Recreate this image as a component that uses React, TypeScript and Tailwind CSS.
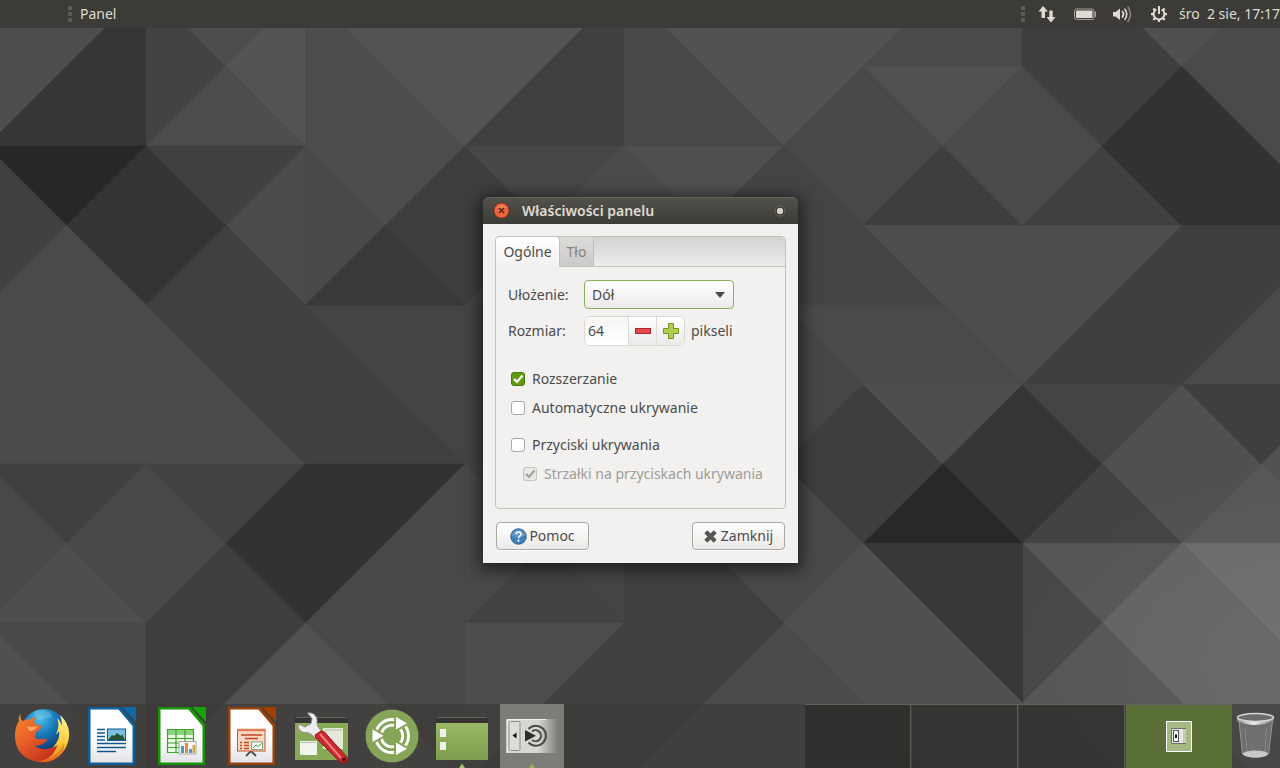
import { useState } from "react";

// Wallpaper facets on a half-cell lattice, "x,y x,y ..." plus a shade
const facets: [string, string][] = [
  ["0,0 2,0 0,2", "#4c4c4c"],
  ["2,0 2,2 0,2", "#363636"],
  ["2,0 3,1 2,2", "#434343"],
  ["2,0 4,0 3,1", "#4d4d4d"],
  ["3,1 4,0 4,2", "#545454"],
  ["2,2 3,1 4,2", "#4d4d4d"],
  ["4,0 6,2 5,3 4,2", "#4d4d4d"],
  ["4,0 8,0 6,2", "#545454"],
  ["8,0 8,2 6,2", "#404040"],
  ["0,2 2,2 1,3", "#272727"],
  ["0,2 1,3 0,4", "#404040"],
  ["2,2 3,3 2,4 1,3", "#343434"],
  ["2,2 4,2 3,3", "#404040"],
  ["4,2 4,4 3,3", "#4b4b4b"],
  ["4,2 5,3 4,4", "#494949"],
  ["1,3 4,6 0,6 0,4", "#4b4b4b"],
  ["3,3 6,6 4,6 2,4", "#404040"],
  ["4,4 6,4 8,4 8,6 6,6", "#444444"],
  ["4,4 6,6 4,6", "#404040"],
  ["5,3 6,4 4,4", "#393939"],
  ["5,3 6,2 7,3 6,4", "#3e3e3e"],
  ["6,2 8,2 7,3", "#474747"],
  ["8,0 12,0 10,2", "#525252"],
  ["8,0 10,2 8,2", "#484848"],
  ["8,2 10,2 9,3", "#505050"],
  ["8,2 9,3 8,4 7,3", "#4b4b4b"],
  ["10,2 11,3 9,5 8,4", "#444444"],
  ["12,0 13,0 13,1 11,1", "#4a4a4a"],
  ["11,1 13,1 12,2", "#515151"],
  ["10,2 11,1 12,2 11,3", "#484848"],
  ["11,3 12,2 13,3", "#3e3e3e"],
  ["12,2 13,1 14,2 13,3", "#4a4a4a"],
  ["13,3 14,2 15,3", "#404040"],
  ["13,0 14,0 15,1 14,2 13,1", "#3f3f3f"],
  ["14,0 16,0 15,1", "#505050"],
  ["16,0 17,0 17,3 15,1", "#4a4a4a"],
  ["15,1 17,3 15,3 14,2", "#323232"],
  ["11,3 15,3 13,5", "#4d4d4d"],
  ["11,3 12,4 10,4", "#444444"],
  ["10,4 12,4 13,5 11,5", "#4a4a4a"],
  ["9,5 10,4 11,5 10,6", "#464646"],
  ["15,3 17,3 15,5 13,5", "#3f3f3f"],
  ["17,3 17,5 15,5", "#4a4a4a"],
  ["11,5 12,6 11,7 10,6", "#3e3e3e"],
  ["11,5 13,5 12,6", "#4e4e4e"],
  ["13,5 14,6 13,7 12,6", "#363636"],
  ["12,6 13,7 11,7", "#282828"],
  ["13,5 15,5 14,6", "#444444"],
  ["15,5 16,6 15,7 14,6", "#505050"],
  ["15,5 17,5 16,6", "#3f3f3f"],
  ["14,6 15,7 13,7", "#434343"],
  ["16,6 17,5 17,7", "#525252"],
  ["16,6 17,7 15,7", "#575757"],
  ["13,7 15,7 14,8", "#555555"],
  ["15,7 17,7 17,9", "#6a6a6a"],
  ["15,7 17,9 17,11 14,8", "#626262"],
  ["13,7 14,8 13,9", "#474747"],
  ["11,7 13,7 13,9", "#383838"],
  ["14,8 16,10 12,10 13,9", "#555555"],
  ["10,6 11,7 10,8 8,6", "#494949"],
  ["11,7 14,10 12,10 10,8", "#505050"],
  ["10,8 12,10 8,10", "#4a4a4a"],
  ["8,6 10,8 8,10", "#404040"],
  ["0,6 2,6 1,7", "#404040"],
  ["2,6 4,6 3,7", "#434343"],
  ["4,6 6,6 4,8 3,7", "#323232"],
  ["2,6 3,7 2,8 1,7", "#494949"],
  ["0,6 1,7 0,8", "#494949"],
  ["1,7 2,8 0,8", "#4e4e4e"],
  ["0,8 2,8 2,10", "#494949"],
  ["0,8 2,10 0,10", "#505050"],
  ["3,7 4,8 2,10 2,8", "#3e3e3e"],
  ["4,8 6,6 6,10", "#484848"],
  ["4,8 6,10 2,10", "#515151"],
  ["6,6 7,7 6,8", "#494949"],
  ["6,6 8,6 8,8 7,7", "#454545"],
  ["7,7 8,8 6,8", "#424242"],
  ["6,8 8,8 6,10", "#4d4d4d"],
  ["8,8 8,10 6,10", "#414141"],
];

function Wallpaper() {
  return (
    <svg
      className="absolute inset-0 h-full w-full"
      viewBox="0.163 0.163 16.07 9.66"
      preserveAspectRatio="none"
      aria-hidden="true"
    >
      <defs>
        <radialGradient id="glow" cx="1" cy="0.85" r="0.25">
          <stop offset="0" stopColor="#fff" stopOpacity="0.06" />
          <stop offset="1" stopColor="#fff" stopOpacity="0" />
        </radialGradient>
      </defs>
      <rect width="17" height="10" fill="#464646" />
      {facets.map(([points, fill]) => (
        <polygon
          key={points}
          points={points}
          fill={fill}
          stroke={fill}
          strokeWidth="0.01"
        />
      ))}
      <rect width="17" height="10" fill="url(#glow)" />
    </svg>
  );
}

function Grip() {
  return (
    <span className="flex flex-col gap-0.5" aria-hidden="true">
      <i className="size-1 bg-[#5c5b57]" />
      <i className="size-1 bg-[#5c5b57]" />
      <i className="size-1 bg-[#5c5b57]" />
    </span>
  );
}

function NetworkIcon() {
  return (
    <svg width="20" height="20" viewBox="0 0 20 20" fill="#dfdbd2">
      <path d="M6 2 L11 7.500 H8 V14 H4.500 V7.500 H1.500Z" />
      <path d="M14 18.500 L9.500 13 H12.300 V6.500 H15.700 V13 H18.500Z" />
    </svg>
  );
}

function BatteryIcon() {
  return (
    <svg width="24" height="20" viewBox="0 0 24 20">
      <rect x="1.500" y="5" width="19.500" height="10.500" rx="2" fill="none" stroke="#a5a29b" />
      <rect x="3" y="6.500" width="16.500" height="7.500" rx="0.500" fill="#dfdbd2" />
      <path d="M21.500 7.500 H23 V13 H21.500Z" fill="#a5a29b" />
    </svg>
  );
}

function VolumeIcon() {
  return (
    <svg width="22" height="20" viewBox="0 0 22 20" fill="none" strokeLinecap="round">
      <path d="M2 8 H4.500 L9 4.500 V16 L4.500 12.500 H2Z" fill="#dfdbd2" />
      <path d="M11.500 7.500 Q13.500 10.200 11.500 13" stroke="#dfdbd2" strokeWidth="1.700" />
      <path d="M14 5.200 Q17.500 10.200 14 15.300" stroke="#dfdbd2" strokeWidth="1.600" />
      <path d="M17 3 Q22 10.200 17 17.500" stroke="#8a8882" strokeWidth="1.500" />
    </svg>
  );
}

function SessionIcon() {
  return (
    <svg width="20" height="20" viewBox="0 0 20 20" fill="none" stroke="#dfdbd2">
      <path d="M7.300 5.300 A5.400 5.400 0 1 0 12.700 5.300" strokeWidth="2" />
      <path d="M10 2 V10" strokeWidth="2" />
      <path
        d="M10 15.500 V18 M4.800 10.200 H2 M15.200 10.200 H18 M6.200 14 L4.300 15.900 M13.800 14 L15.700 15.900 M6 6.300 L4.300 4.500 M14 6.300 L15.700 4.500"
        strokeWidth="2.200"
      />
    </svg>
  );
}

function TopPanel() {
  return (
    <header className="relative flex h-7 items-center justify-between bg-[#3c3b37] text-sm text-[#dfdbd2] [text-shadow:1px_1px_0_#22211e]">
      <div className="flex items-center gap-2 pl-17">
        <Grip />
        <button type="button">Panel</button>
      </div>
      <div className="flex items-center">
        <Grip />
        <button type="button" aria-label="Sieć" className="ml-3">
          <NetworkIcon />
        </button>
        <button type="button" aria-label="Bateria" className="ml-4">
          <BatteryIcon />
        </button>
        <button type="button" aria-label="Głośność" className="ml-3.5">
          <VolumeIcon />
        </button>
        <button type="button" aria-label="Sesja" className="ml-4">
          <SessionIcon />
        </button>
        <button type="button" className="ml-2.5 whitespace-pre">
          śro  2 sie, 17:17
        </button>
      </div>
    </header>
  );
}

function FirefoxIcon() {
  return (
    <svg viewBox="0 0 64 64" className="size-16">
      <defs>
        <radialGradient id="ff-globe" cx="0.4" cy="0.2" r="0.8">
          <stop offset="0" stopColor="#4fc0ec" />
          <stop offset="0.45" stopColor="#1879b9" />
          <stop offset="1" stopColor="#0c2b61" />
        </radialGradient>
        <linearGradient id="ff-fox" x1="0" y1="0" x2="0.7" y2="1">
          <stop offset="0" stopColor="#f08a2a" />
          <stop offset="0.5" stopColor="#e8602a" />
          <stop offset="1" stopColor="#c5301c" />
        </linearGradient>
        <linearGradient id="ff-tail" x1="0.6" y1="0" x2="0.2" y2="1">
          <stop offset="0" stopColor="#fdf08a" />
          <stop offset="0.5" stopColor="#fbc42a" />
          <stop offset="1" stopColor="#e8691f" />
        </linearGradient>
      </defs>
      <circle cx="34" cy="28" r="23" fill="url(#ff-globe)" />
      <path d="M24 7 Q31 4 39 8 Q45 12 40 14 Q34 13 32 17 Q26 16 24 12Z" fill="#7fd0ee" opacity="0.35" />
      <path
        d="M50 11 C57 17 60 26 59 33 C57 48 46 58 32 58 C27 58 23 57 20 55 C33 56 44 50 47 42 C45 43 44 43 43 43 C48 38 50 32 49 27 C48 29 47 30 46 30 C49 24 49 19 47 14 C50 17 51 19 52 22 C52 17 51 14 50 11Z"
        fill="url(#ff-tail)"
      />
      <path
        d="M10.500 9.500 C10 13 11 16 13 17 C16 15 19 15 21 15.500 C22 14 24 12.800 26 12.500 C24 15 24 18 25 20 C26 21 29 21 31 21.500 C32 24 29 26 26 28 C25 30 26 31 25 33 C27 37 32 34 36 35 C38 36 36 38 34 39 C30 42 26 42 24 41 C30 47 41 46 47 41 C45 51 36 57 28 57.500 C13 56 5 45 5 32 C5 25 7 20 9 17 C8 15 9 12 10.500 9.500Z"
        fill="url(#ff-fox)"
      />
      <path d="M17 22 Q21 24 28 22 Q24 27 20 27 Q18 26 17 22Z" fill="#ffc48a" opacity="0.7" />
      <path d="M28 57 Q46 56 54 39 Q56 50 42 57 Q34 60 28 57Z" fill="#e4561d" opacity="0.5" />
    </svg>
  );
}

function DocBase({ color, corner }: { color: string; corner: string }) {
  return (
    <>
      <defs>
        <linearGradient id="paper" x1="0" y1="0" x2="0" y2="1">
          <stop offset="0.500" stopColor="#ffffff" />
          <stop offset="1" stopColor="#e4e4e8" />
        </linearGradient>
      </defs>
      <path d="M8 3 H40.500 L55 20 V61 H8Z" fill={color} />
      <path d="M10.500 5.500 H38.500 L52.500 22 V58.500 H10.500Z" fill="url(#paper)" />
      <path d="M42 3 H56 V18Z" fill={corner} />
    </>
  );
}

function WriterIcon() {
  return (
    <svg viewBox="0 0 64 64" className="size-16">
      <DocBase color="#0d5f98" corner="#0f69a8" />
      <path
        d="M17 25.500 H25 M17 29 H25 M17 32.500 H25 M17 36 H25 M17 39.500 H46 M17 43.500 H46 M17 47.500 H36"
        stroke="#10578c"
        strokeWidth="1.500"
      />
      <rect x="27.500" y="25" width="18" height="11.500" fill="#7cc0e4" stroke="#10578c" />
      <path d="M28 36 L32 31 L34 32 L37 29 L41 32 L42 30 L45 36Z" fill="#2b5036" />
    </svg>
  );
}

function CalcIcon() {
  return (
    <svg viewBox="0 0 64 64" className="size-16">
      <DocBase color="#189206" corner="#18a303" />
      <rect x="17.500" y="25.500" width="26" height="23" fill="#e9f8e2" />
      <path d="M17 25 H44 V29 H17Z" fill="#8cd67a" />
      <path
        d="M17 25.500 H44 M17 30 H44 M17 34.500 H44 M17 39 H44 M17 43.500 H44 M17 48.500 H44 M17.500 25 V49 M26 25 V49 M35 25 V49 M43.500 25 V49"
        stroke="#3ba52a"
        strokeWidth="1.200"
      />
      <rect x="29" y="37.500" width="17" height="12.500" fill="#f6f6f6" stroke="#a8a8a8" />
      <path d="M31 42 H34 V49 H31Z M39 45 H42 V49 H39Z" fill="#4a97d2" />
      <path d="M35 39 H38 V49 H35Z" fill="#e8863c" />
      <path d="M42.500 41 H45 V49 H42.500Z" fill="#d7a347" />
    </svg>
  );
}

function ImpressIcon() {
  return (
    <svg viewBox="0 0 64 64" className="size-16">
      <DocBase color="#96400f" corner="#a33e03" />
      <path d="M31 47 L26 52 M31 47 L36 52" stroke="#555" strokeWidth="2" />
      <rect x="17.500" y="26" width="27.500" height="21" fill="#fbd8c6" stroke="#c2572c" />
      <path d="M17 26 H45.500" stroke="#e27c52" strokeWidth="2.500" />
      <path
        d="M21 31 H42 M25 34.500 H38 M20 38.500 H22 M24 38.500 H29 M20 41.500 H22 M24 41.500 H29 M20 44.500 H22 M24 44.500 H29"
        stroke="#bd4718"
        strokeWidth="1.500"
      />
      <rect x="31.500" y="38" width="11" height="7.500" fill="#fff" stroke="#88a887" />
      <path d="M33 44 L36 41 L38 42.500 L41.500 39.500" stroke="#3aa02c" fill="none" />
    </svg>
  );
}

function ToolsIcon() {
  return (
    <svg viewBox="0 0 64 64" className="size-16">
      <rect x="5" y="13" width="53" height="7" rx="1" fill="#353432" />
      <path d="M6 13.500 H57" stroke="#62625e" />
      <rect x="5" y="19" width="53" height="37" fill="#88aa58" />
      <rect x="10" y="37" width="17" height="14" fill="#f1f3ed" />
      <rect x="33" y="24" width="20" height="21" fill="#e4e9da" />
      <path d="M11 38.500 H26 M34 26 H52" stroke="#b9bfae" />
      <path
        d="M8.500 20 C7 25 11 29.500 17 28.500 C20 29 22 31 25 34 L32 28 C29 24 27 22 27 19 C28 13 24 8 17.500 9 L22 14.500 L21 19.500 L15 23Z"
        fill="#eeeeee"
        stroke="#8c8c8c"
      />
      <path d="M25 31 L31 27 Q35 27 37 31 L57 53 Q59 57 55 58.500 Q51 60 49 57 L28 36 Q25 34 25 31Z" fill="#c92a31" stroke="#8e191e" />
      <path d="M30 30 L51 54" stroke="#f07a78" strokeWidth="2" />
      <circle cx="54" cy="55.500" r="2" fill="#5c1114" />
    </svg>
  );
}

function MateIcon() {
  return (
    <svg viewBox="0 0 64 64" className="size-16">
      <circle cx="32" cy="32" r="26.500" fill="#87a556" />
      <g fill="none" stroke="#fff" strokeWidth="2.800">
        <circle cx="32" cy="32" r="16.500" />
        <circle cx="32" cy="32" r="10.800" />
      </g>
      <g fill="#fff" stroke="#87a556" strokeWidth="4" paintOrder="stroke">
        <path d="M12.500 25.500 V38 L23.500 31.700Z" />
        <path d="M36 13 V25.500 L47 19.300Z" />
        <path d="M36 38.500 V51 L47 44.700Z" />
      </g>
    </svg>
  );
}

function WindowIcon() {
  return (
    <svg viewBox="0 0 64 64" className="size-16">
      <defs>
        <linearGradient id="win-green" x1="0" y1="0" x2="0" y2="1">
          <stop offset="0" stopColor="#9aba68" />
          <stop offset="1" stopColor="#7b9c4c" />
        </linearGradient>
      </defs>
      <rect x="6" y="13" width="52" height="7" rx="1" fill="#353432" />
      <path d="M7 13.500 H57" stroke="#62625e" />
      <rect x="6" y="19" width="52" height="37" fill="url(#win-green)" />
      <rect x="10" y="25" width="6" height="8" fill="#f0f0ec" />
      <rect x="10" y="38" width="6" height="8" fill="#f0f0ec" />
      <path d="M32 59.500 L35 64 H29Z" fill="#a3c36e" />
    </svg>
  );
}

function PanelAppletIcon() {
  return (
    <svg viewBox="0 0 64 64" className="size-16">
      <defs>
        <linearGradient id="applet-fade">
          <stop offset="0.600" stopColor="#d6d8d2" />
          <stop offset="1" stopColor="#d6d8d2" stopOpacity="0" />
        </linearGradient>
      </defs>
      <rect x="6.500" y="15" width="52" height="34" fill="url(#applet-fade)" />
      <path d="M7 49 V15.500 H46" stroke="#f2f2f0" fill="none" />
      <rect x="9" y="17.500" width="11" height="29" rx="1.500" fill="#dcddd8" stroke="#8e8f8b" />
      <path d="M16.500 28.500 V34.500 L12.500 31.500Z" fill="#111" />
      <g fill="none" stroke="#4b4c4a" strokeWidth="2">
        <path d="M28.500 25 A10 10 0 1 1 28.500 38.500" />
        <path d="M32 27.500 A5.500 5.500 0 1 1 32 36" />
      </g>
      <path d="M25 26 V37.500 L36 31.700Z" fill="#2d2e2d" />
      <path d="M32 59.500 L35 64 H29Z" fill="#8fb450" />
    </svg>
  );
}

function TrashIcon() {
  return (
    <svg viewBox="0 0 48 64" className="h-16 w-12">
      <defs>
        <linearGradient id="trash-rim" x1="0" x2="1">
          <stop offset="0" stopColor="#8d8d8b" />
          <stop offset="0.450" stopColor="#efefed" />
          <stop offset="1" stopColor="#777775" />
        </linearGradient>
      </defs>
      <path d="M7 17 L10.500 50 Q23.500 57 36.500 50 L40.500 17Z" fill="#6f6f6d" stroke="#979795" />
      <path d="M13 24 L15 48 M34.500 24 L33 48" stroke="#858583" />
      <ellipse cx="23.500" cy="50" rx="12.500" ry="3.500" fill="#c8c8c6" />
      <path d="M5 13 V17 Q23.500 25 42 17 V13Z" fill="url(#trash-rim)" />
      <ellipse cx="23.500" cy="13.500" rx="18" ry="4" fill="#6b6b69" stroke="#d5d5d3" strokeWidth="1.500" />
    </svg>
  );
}

const launchers = [
  { name: "Firefox", icon: FirefoxIcon },
  { name: "LibreOffice Writer", icon: WriterIcon },
  { name: "LibreOffice Calc", icon: CalcIcon },
  { name: "LibreOffice Impress", icon: ImpressIcon },
  { name: "MATE Tweak", icon: ToolsIcon },
  { name: "Ubuntu MATE", icon: MateIcon },
  { name: "Panel", icon: WindowIcon },
  { name: "Właściwości panelu", icon: PanelAppletIcon, active: true },
];

function BottomPanel() {
  return (
    <footer className="relative flex h-16 justify-between bg-[#3c3b37]/70">
      <nav className="flex gap-1.5 pl-2.5">
        {launchers.map(({ name, icon: Icon, active }) => (
          <button
            key={name}
            type="button"
            aria-label={name}
            className={active ? "bg-[#7c7c79]" : ""}
          >
            <Icon />
          </button>
        ))}
      </nav>
      <div className="flex">
        <div className="grid w-[427px] grid-cols-4 gap-px border-t border-[#63625f]">
          <button type="button" aria-label="Obszar roboczy 1" className="border-r border-[#5d5c59] bg-black/25" />
          <button type="button" aria-label="Obszar roboczy 2" className="border-r border-[#5d5c59] bg-black/20" />
          <button type="button" aria-label="Obszar roboczy 3" className="border-r border-[#5d5c59] bg-black/20" />
          <button
            type="button"
            aria-label="Obszar roboczy 4"
            className="flex items-center justify-center bg-[#5b6f39]"
          >
            <svg width="26" height="31" viewBox="0 0 26 31">
              <rect x="0.500" y="0.500" width="25" height="30" fill="#a5ba82" stroke="#fff" />
              <path d="M6 8 H17 V23 H6Z" fill="#e5e8e0" />
              <path d="M17 8 H20 V23 H17Z" fill="#c3cdb3" />
              <path d="M20 7.500 H5.500 V22.500 H20" fill="none" stroke="#6f7368" />
              <rect x="7.500" y="9.500" width="5" height="11" fill="#fff" stroke="#555" />
              <path d="M9 13.500 H11 V17 H9Z" fill="#111" />
            </svg>
          </button>
        </div>
        <button type="button" aria-label="Kosz">
          <TrashIcon />
        </button>
      </div>
    </footer>
  );
}

interface CheckProps {
  label: string;
  checked: boolean;
  disabled?: boolean;
  onChange?: (value: boolean) => void;
}

function Check({ label, checked, disabled, onChange }: CheckProps) {
  return (
    <label
      className={`flex h-6 items-center gap-[7px] ${disabled ? "text-[#a09c98]" : ""}`}
    >
      <span className="grid size-3.5 place-items-center">
        <input
          type="checkbox"
          checked={checked}
          disabled={disabled}
          onChange={(e) => onChange?.(e.target.checked)}
          className="col-start-1 row-start-1 size-3.5 appearance-none rounded-[3px] border border-[#a9a7a4] bg-white checked:border-[#48790c] checked:bg-[#619c10] disabled:border-[#c4c2bf] disabled:bg-[#e9e8e6]"
        />
        {checked && (
          <svg
            viewBox="0 0 14 14"
            className="pointer-events-none col-start-1 row-start-1 size-3.5"
            fill="none"
            stroke={disabled ? "#a3a19d" : "#fff"}
            strokeWidth="2.200"
          >
            <path d="M3 7 L6 10 L11.500 3.500" />
          </svg>
        )}
      </span>
      {label}
    </label>
  );
}

const dialogBtnCls =
  "flex h-7 w-[93px] items-center justify-center rounded border border-[#aaa8a5] bg-linear-to-b from-white to-[#eceae8] shadow-[0_1px_0_#fff]";

function PanelProperties() {
  const [tab, setTab] = useState("general");
  const [size, setSize] = useState(64);
  const [expand, setExpand] = useState(true);
  const [autohide, setAutohide] = useState(false);
  const [hideButtons, setHideButtons] = useState(false);

  return (
    <section
      role="dialog"
      aria-labelledby="dialog-title"
      className="absolute top-[197px] left-[483px] w-[315px] rounded-t-md text-sm text-[#4c4c4c] shadow-[0_3px_16px_4px_rgba(0,0,0,0.55)]"
    >
      <div className="flex h-[27px] items-center rounded-t-md border-t border-[#62615b] bg-linear-to-b from-[#52514a] to-[#3c3b37] pr-3 pb-px pl-2.5 text-[#dfdbd2]">
        <button type="button" aria-label="Zamknij okno" className="size-[17px]">
          <svg viewBox="0 0 17 17">
            <circle cx="8.500" cy="8.500" r="7.700" fill="#ec6438" stroke="#6b2d1b" />
            <path d="M3 6 Q8.500 -1 14 6" fill="#f07f5c" />
            <path d="M6 6 L11 11 M11 6 L6 11" stroke="#45201a" strokeWidth="1.200" />
          </svg>
        </button>
        <h1 id="dialog-title" className="ml-3 flex-1 font-semibold">
          Właściwości panelu
        </h1>
        <button type="button" aria-label="Menu okna">
          <svg width="12" height="12" viewBox="0 0 12 12">
            <circle cx="6" cy="6" r="5" fill="#33322e" stroke="#6a6962" />
            <circle cx="6" cy="6" r="3.200" fill="#d2cfc7" />
          </svg>
        </button>
      </div>

      <div className="bg-[#f2f1ef] px-3 pt-3 pb-[13px]">
        <div className="rounded border border-[#c3c1be]">
          <div
            role="tablist"
            className="flex h-[30px] rounded-t border-b border-[#c3c1be] bg-linear-to-b from-[#d3d2d0] to-[#edecea]"
          >
            <button
              type="button"
              role="tab"
              aria-selected={tab === "general"}
              onClick={() => setTab("general")}
              className="-mb-px w-16 rounded-t border-r border-[#c3c1be] bg-linear-to-b from-white to-[#f2f1ef]"
            >
              Ogólne
            </button>
            <button
              type="button"
              role="tab"
              aria-selected={tab === "background"}
              onClick={() => setTab("background")}
              className="w-[34px] border-r border-[#c3c1be] bg-linear-to-b from-[#dddcda] to-[#cbcac8] text-[#828180]"
            >
              Tło
            </button>
          </div>

          <form className="px-3 pt-[13px] pb-[22px]">
            <div className="grid grid-cols-[76px_1fr] items-center gap-y-[7px]">
              <label htmlFor="orientation">Ułożenie:</label>
              <div className="grid w-[150px] items-center">
                <select
                  id="orientation"
                  defaultValue="bottom"
                  className="col-start-1 row-start-1 h-[29px] appearance-none rounded border border-[#8bad5a] bg-linear-to-b from-white to-[#eceae8] px-[7px]"
                >
                  <option value="top">Góra</option>
                  <option value="bottom">Dół</option>
                  <option value="left">Lewa</option>
                  <option value="right">Prawa</option>
                </select>
                <svg
                  viewBox="0 0 10 6"
                  className="pointer-events-none col-start-1 row-start-1 mr-[9px] h-1.5 w-2.5 justify-self-end"
                >
                  <path d="M0 0 H10 L5 6Z" fill="#4c4c4c" />
                </svg>
              </div>

              <label htmlFor="size">Rozmiar:</label>
              <div className="flex items-center gap-1.5">
                <div className="flex h-[30px] w-[101px] overflow-hidden rounded-md border border-[#dad8d5] bg-white">
                  <input
                    id="size"
                    value={size}
                    onChange={(e) => setSize(Number(e.target.value) || 0)}
                    className="w-[43px] bg-linear-to-b from-[#f6f5f4] to-white pl-[3px]"
                  />
                  <button
                    type="button"
                    aria-label="Zmniejsz"
                    onClick={() => setSize(size - 1)}
                    className="flex flex-1 items-center justify-center border-l border-[#dddbd8] bg-linear-to-b from-white to-[#eceae8]"
                  >
                    <svg width="16" height="6" viewBox="0 0 16 6">
                      <rect x="0.500" y="0.500" width="15" height="5" fill="#e14d4d" stroke="#b8222a" />
                    </svg>
                  </button>
                  <button
                    type="button"
                    aria-label="Zwiększ"
                    onClick={() => setSize(size + 1)}
                    className="flex flex-1 items-center justify-center border-l border-[#dddbd8] bg-linear-to-b from-white to-[#eceae8]"
                  >
                    <svg width="16" height="16" viewBox="0 0 16 16">
                      <path
                        d="M5.500 0.500 H10.500 V5.500 H15.500 V10.500 H10.500 V15.500 H5.500 V10.500 H0.500 V5.500 H5.500Z"
                        fill="#add04e"
                        stroke="#6f9420"
                      />
                    </svg>
                  </button>
                </div>
                <span>pikseli</span>
              </div>
            </div>

            <div className="mt-[21px] flex flex-col gap-[5px] pl-[3px]">
              <Check label="Rozszerzanie" checked={expand} onChange={setExpand} />
              <Check label="Automatyczne ukrywanie" checked={autohide} onChange={setAutohide} />
            </div>
            <div className="mt-[13px] flex flex-col gap-[5px] pl-[3px] whitespace-nowrap">
              <Check label="Przyciski ukrywania" checked={hideButtons} onChange={setHideButtons} />
              <div className="pl-3">
                <Check label="Strzałki na przyciskach ukrywania" checked disabled />
              </div>
            </div>
          </form>
        </div>

        <div className="mt-[13px] flex justify-between px-px">
          <button type="button" className={`${dialogBtnCls} gap-0.5`}>
            <svg width="17" height="17" viewBox="0 0 17 17">
              <circle cx="8.500" cy="8.500" r="7.700" fill="#3f7fbd" stroke="#285d92" />
              <path d="M2 8 A6.500 6.500 0 0 1 15 8 Q8.500 10 2 8Z" fill="#7baedb" opacity="0.6" />
              <path d="M6 6.300 Q6 4 8.500 4 Q11 4 11 6.300 Q11 7.500 9.500 8.300 Q8.500 9 8.500 10.300" fill="none" stroke="#fff" strokeWidth="1.600" />
              <circle cx="8.500" cy="12.700" r="1.100" fill="#fff" />
            </svg>
            Pomoc
          </button>
          <button type="button" className={`${dialogBtnCls} gap-1`}>
            <svg width="13" height="13" viewBox="0 0 13 13" stroke="#555753" strokeWidth="4.200">
              <path d="M1.800 1.800 L11.200 11.200 M11.200 1.800 L1.800 11.200" />
            </svg>
            Zamknij
          </button>
        </div>
      </div>
    </section>
  );
}

export default function App() {
  return (
    <div className="relative flex min-h-screen flex-col justify-between overflow-hidden bg-[#464646] font-['Noto_Sans','Open_Sans',sans-serif]">
      <Wallpaper />
      <TopPanel />
      <BottomPanel />
      <PanelProperties />
    </div>
  );
}
